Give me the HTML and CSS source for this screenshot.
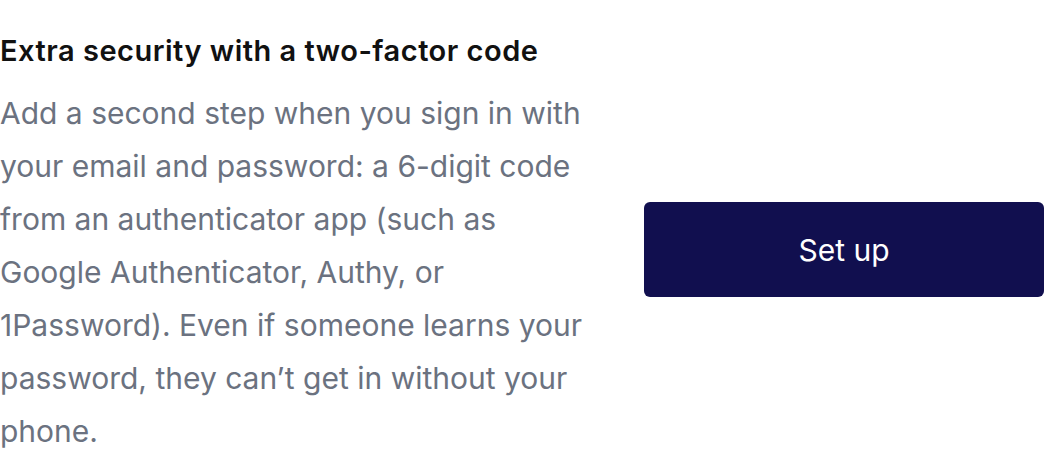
FILE: index.html
```html
<!DOCTYPE html>
<html lang="en">
  <head>
    <meta charset="UTF-8" />
    <meta name="viewport" content="width=device-width, initial-scale=1.0" />
    <title>Two-factor code</title>
    <link rel="stylesheet" href="styles.css">
  </head>
  <body>
    <div class="setting-row">
      <div class="setting-text">
        <h2>Extra security with a two-factor code</h2>
        <p>
          Add a second step when you sign in with your email and password: a
          6-digit code from an authenticator app (such as Google Authenticator,
          Authy, or 1Password). Even if someone learns your password, they
          can’t get in without your phone.
        </p>
      </div>
      <button type="button" class="setup-btn">Set up</button>
    </div>
  </body>
</html>
```

FILE: styles.css
```css
body {
  font-family: Inter, "Noto Sans", sans-serif;
  margin: 0;
  background: #ffffff;
}
.setting-row {
  display: flex;
  align-items: center;
  justify-content: space-between;
  padding-top: 33px;
}
.setting-text {
  width: 595px;
}
.setting-text h2 {
  font-size: 29px;
  font-weight: 600;
  color: #111111;
  margin: 0 0 18px;
  line-height: 36px;
  letter-spacing: 0.5px;
}
.setting-text p {
  font-size: 30px;
  line-height: 53px;
  color: #6b7280;
  margin: 0;
}
.setup-btn {
  width: 400px;
  height: 95px;
  margin-top: 8px;
  background-color: #110f4f;
  color: #ffffff;
  border: none;
  border-radius: 6px;
  font-family: inherit;
  font-size: 30px;
  cursor: pointer;
}
```
